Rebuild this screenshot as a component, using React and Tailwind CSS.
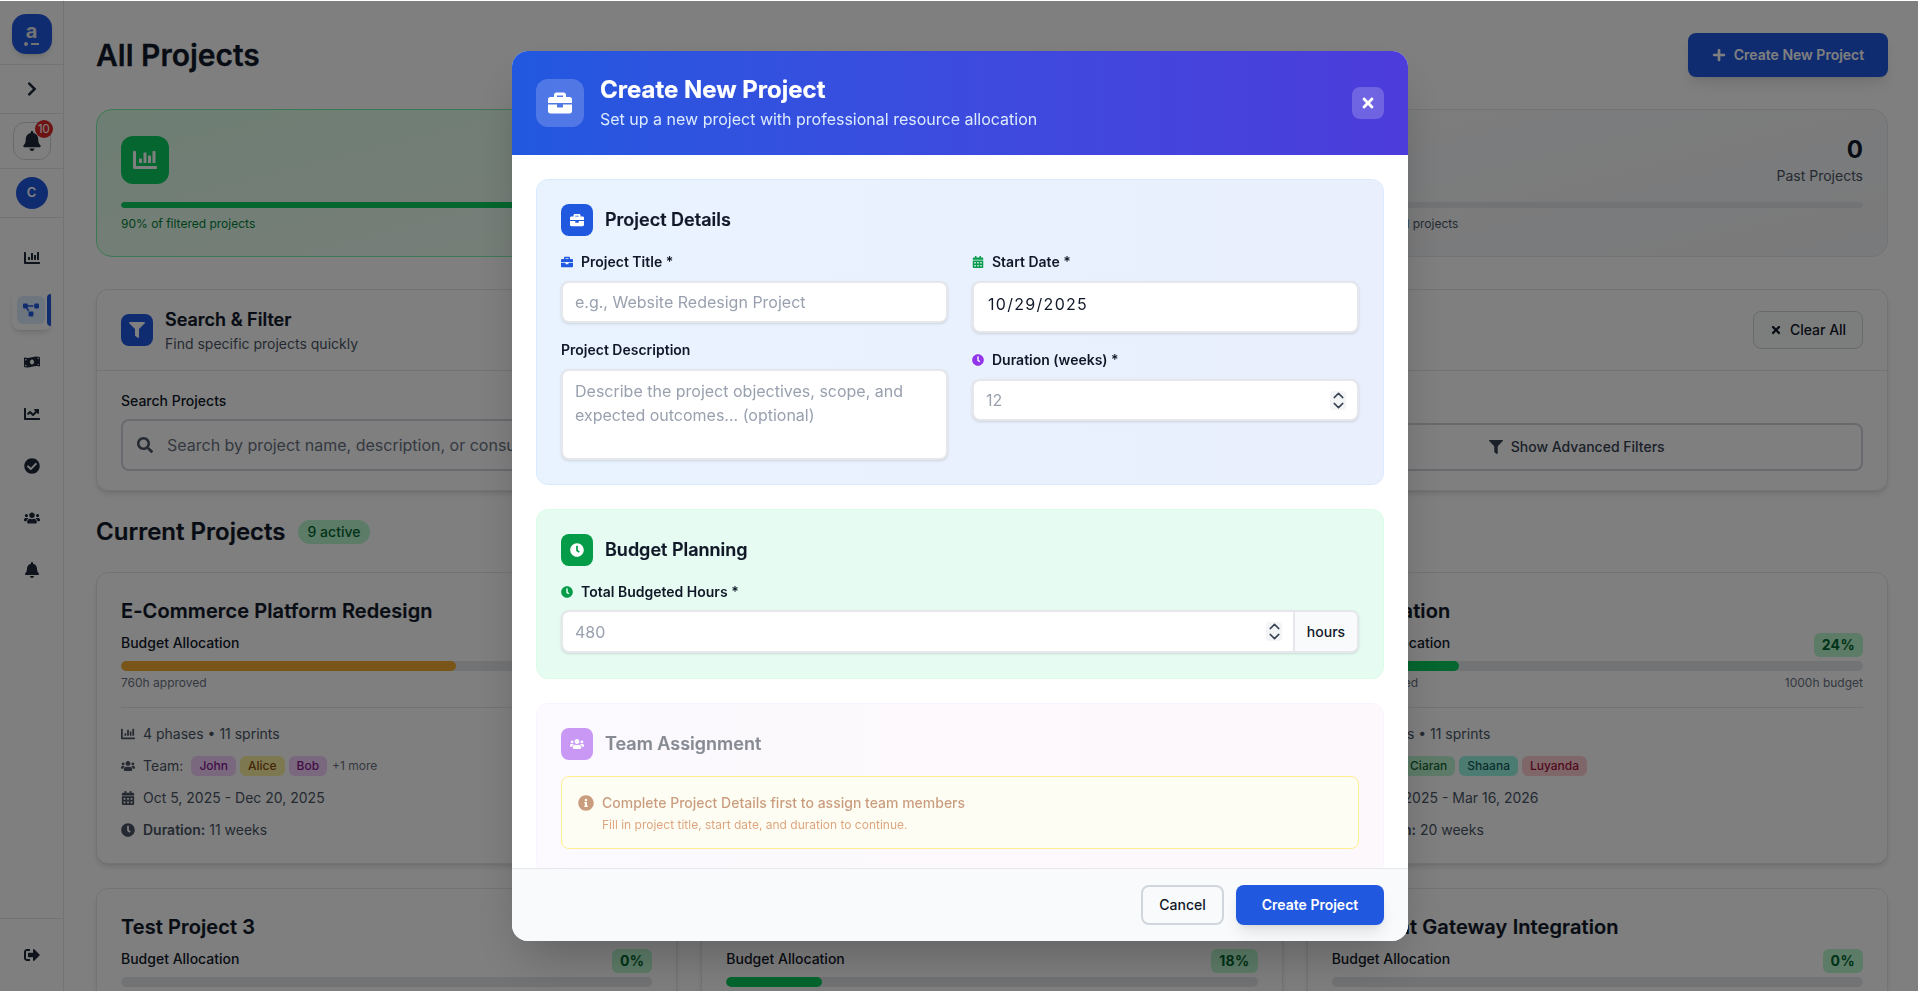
import {
  FaBell, FaBriefcase, FaCalendarAlt, FaChartBar, FaChartLine, FaCheckCircle, FaChevronRight,
  FaClock, FaFilter, FaInfoCircle, FaMoneyBillWave, FaPlus, FaProjectDiagram, FaSearch,
  FaSignOutAlt, FaTimes, FaUsers,
} from 'react-icons/fa'

const tagColors = {
  purple: 'bg-[#f5d0fe] text-[#86198f]',
  yellow: 'bg-[#fdf0a0] text-[#854d0e]',
  green: 'bg-[#bbf7d0] text-[#166534]',
  teal: 'bg-[#99f6e4] text-[#115e59]',
  red: 'bg-[#fecdd3] text-[#9f1239]',
}

const rowOne = [
  {
    title: 'E-Commerce Platform Redesign', pct: 63, bar: 'bg-[#f4aa30]', approved: '760h approved', budget: '1200h budget',
    phases: '4 phases', tags: [['John', 'purple'], ['Alice', 'yellow'], ['Bob', 'purple']], more: '+1 more',
    dates: 'Oct 5, 2025 - Dec 20, 2025', weeks: '11 weeks',
  },
  {
    title: 'Customer Portal', pct: 40, bar: 'bg-[#0acc5e]', approved: '320h approved', budget: '800h budget',
    phases: '3 phases', tags: [['John', 'purple'], ['Alice', 'yellow']], more: '',
    dates: 'Sep 1, 2025 - Dec 1, 2025', weeks: '13 weeks',
  },
  {
    title: 'UI Migration', pct: 24, bar: 'bg-[#0acc5e]', approved: '240h approved', budget: '1000h budget',
    phases: '4 phases', tags: [['Ciaran', 'green'], ['Shaana', 'teal'], ['Luyanda', 'red']], more: '',
    dates: 'Oct 27, 2025 - Mar 16, 2026', weeks: '20 weeks',
  },
]

const rowTwo = [
  { title: 'Test Project 3', pct: 0 },
  { title: 'Mobile App Launch', pct: 18 },
  { title: 'Payment Gateway Integration', pct: 0 },
]

function Sidebar() {
  const nav = [FaChartBar, FaProjectDiagram, FaMoneyBillWave, FaChartLine, FaCheckCircle, FaUsers, FaBell]
  return (
    <aside className="w-16 h-screen shrink-0 flex flex-col bg-white border-r border-gray-200 text-gray-800">
      <div className="h-[65px] flex items-center justify-center border-b border-gray-200 pt-1">
        <div className="w-10 h-10 rounded-[14px] bg-[#2158e0] shadow-md flex flex-col items-center justify-center text-white">
          <span className="font-bold text-xl leading-4 text-gray-200">a</span>
          <span className="flex items-center gap-[3px] mt-[3px]">
            <span className="w-[4px] h-[4px] rounded-full bg-gray-200"></span>
            <span className="w-2 h-[2px] bg-gray-200"></span>
          </span>
        </div>
      </div>
      <div className="h-[49px] flex items-center justify-center border-b border-gray-200">
        <FaChevronRight className="text-base" />
      </div>
      <div className="h-[55px] flex items-center justify-center border-b border-gray-200">
        <div className="relative w-[38px] h-[38px] rounded-xl border border-gray-300 flex items-center justify-center">
          <FaBell className="text-xl" />
          <span className="absolute -top-[3px] -right-[3px] w-[18px] h-[18px] rounded-full bg-[#dc2626] text-white text-xs flex items-center justify-center tracking-tighter">10</span>
        </div>
      </div>
      <div className="h-[49px] flex items-center justify-center border-b border-gray-200">
        <div className="w-8 h-8 rounded-full bg-[#2158e0] text-white text-[13px] font-semibold flex items-center justify-center">C</div>
      </div>
      <nav className="flex-1 flex flex-col items-center gap-3 pt-5">
        {nav.map((Icon, i) =>
          i === 1 ? (
            <div key={i} className="relative w-[39px] h-10 rounded-lg shadow-md flex items-center justify-center">
              <div className="w-7 h-7 -ml-[2px] rounded-md bg-blue-100 flex items-center justify-center text-[#2158e0]">
                <Icon className="text-base" />
              </div>
              <span className="absolute right-0 top-1 h-8 w-1 rounded-l bg-[#2158e0]"></span>
            </div>
          ) : (
            <div key={i} className="h-10 flex items-center justify-center">
              <Icon className="text-base" />
            </div>
          )
        )}
      </nav>
      <div className="h-[73px] flex items-center justify-center border-t border-gray-200">
        <FaSignOutAlt className="text-base" />
      </div>
    </aside>
  )
}

function StatCard({ tone, icon, value, label, note }) {
  const green = tone === 'green'
  return (
    <div className={`h-[148px] rounded-2xl border p-6 ${green ? 'bg-linear-to-br from-[#dcfce7] to-[#f0fdf4] border-green-300' : 'bg-linear-to-br from-gray-50 to-gray-100 border-gray-200'}`}>
      <div className="flex items-start justify-between h-[48px] mt-[2px]">
        <div className={`w-12 h-12 rounded-xl flex items-center justify-center text-white ${green ? 'bg-[#0acc5e]' : 'bg-gray-500'}`}>
          {icon}
        </div>
        <div className="text-right -mt-[2px]">
          <div className="text-2xl font-bold text-gray-900 leading-8">{value}</div>
          <div className="text-sm text-gray-600 leading-5">{label}</div>
        </div>
      </div>
      <div className="h-[6px] mt-[18px] rounded-full bg-gray-200 overflow-hidden">
        <div className={`h-full rounded-full ${green ? 'bg-[#0acc5e] w-[90%]' : 'w-0'}`}></div>
      </div>
      <div className={`text-xs mt-2 ${green ? 'text-green-700' : 'text-gray-600'}`}>{note}</div>
    </div>
  )
}

function Percent({ value }) {
  return <span className="h-6 px-2 rounded-md bg-green-200 text-green-800 text-sm font-bold flex items-center tracking-wide">{value}%</span>
}

function CardTop({ title, pct, bar }) {
  return (
    <>
      <h3 className="text-xl font-semibold tracking-[0.1px] [-webkit-text-stroke:0.2px] text-gray-900 leading-7 mb-[7px]">{title}</h3>
      <div className="flex items-center justify-between h-[26px]">
        <span className="text-sm font-medium text-gray-900 -mt-[5px]">Budget Allocation</span>
        <Percent value={pct} />
      </div>
      <div className="h-[10px] mt-[3px] rounded-full bg-gray-200 overflow-hidden">
        <div className={`h-full rounded-full ${bar}`} style={{ width: `${pct}%` }}></div>
      </div>
    </>
  )
}

function ProjectCard({ p }) {
  return (
    <div className="h-[292px] rounded-xl border border-gray-200 bg-white shadow-md p-6">
      <CardTop title={p.title} pct={p.pct} bar={p.bar} />
      <div className="flex justify-between text-xs text-gray-500 leading-4 mt-1">
        <span>{p.approved}</span>
        <span>{p.budget}</span>
      </div>
      <div className="border-t border-gray-200 mt-4 pt-4 flex flex-col gap-3 text-sm text-gray-600">
        <div className="flex items-center h-5 gap-2">
          <FaChartBar className="text-sm shrink-0" />
          <span>{p.phases} • 11 sprints</span>
        </div>
        <div className="flex items-center h-5 gap-2">
          <FaUsers className="text-sm shrink-0" />
          <span>Team:</span>
          <span className="flex items-center gap-1">
            {p.tags.map(([name, color]) => (
              <span key={name} className={`h-5 px-2 rounded-md text-xs font-medium flex items-center ${tagColors[color]}`}>{name}</span>
            ))}
            {p.more && <span className="text-xs text-gray-500 ml-[1px]">{p.more}</span>}
          </span>
        </div>
        <div className="flex items-center h-5 gap-2">
          <FaCalendarAlt className="text-sm shrink-0" />
          <span>{p.dates}</span>
        </div>
        <div className="flex items-center h-5 gap-2">
          <FaClock className="text-sm shrink-0" />
          <span><span className="font-semibold">Duration:</span> {p.weeks}</span>
        </div>
      </div>
    </div>
  )
}

function ShortCard({ p }) {
  return (
    <div className="h-[292px] rounded-xl border border-gray-200 bg-white shadow-md p-6">
      <CardTop title={p.title} pct={p.pct} bar="bg-[#0acc5e]" />
    </div>
  )
}

function Spinner() {
  return (
    <span className="w-4 h-[19px] rounded bg-gray-100 flex items-center justify-center shrink-0">
      <svg width="11" height="17" viewBox="0 0 11 17" fill="none" stroke="#374151" strokeWidth="1.5" strokeLinecap="round" strokeLinejoin="round">
        <path d="M1.2 5.6 5.5 1.4 9.8 5.6" />
        <path d="M1.2 11.4 5.5 15.6 9.8 11.4" />
      </svg>
    </span>
  )
}

function Label({ icon, children }) {
  return (
    <label className="flex items-center gap-2 h-5 text-sm font-semibold text-gray-900 mb-[9px]">
      {icon}
      {children}
    </label>
  )
}

function SectionHead({ icon, color, title }) {
  return (
    <div className="flex items-center gap-3 mb-4">
      <div className={`w-8 h-8 rounded-lg flex items-center justify-center text-white text-sm ${color}`}>{icon}</div>
      <h3 className="text-lg font-semibold [-webkit-text-stroke:0.2px] text-gray-900">{title}</h3>
    </div>
  )
}

const inputClass = 'w-full h-[42px] rounded-lg border-2 border-gray-200 bg-white shadow-sm px-[12px] text-base outline-none placeholder:text-gray-400'

function Modal() {
  return (
    <div className="fixed inset-x-0 bottom-0 top-px bg-black/50 flex items-center justify-center pl-[2px]">
      <div className="w-[896px] h-[890px] rounded-2xl bg-white shadow-2xl overflow-hidden flex flex-col">
        <div className="h-[104px] shrink-0 px-6 flex items-center justify-between bg-linear-to-r from-[#2158e0] to-[#4c3cdb] text-white">
          <div className="flex items-center gap-4">
            <div className="w-12 h-12 rounded-xl bg-white/20 flex items-center justify-center">
              <FaBriefcase className="text-2xl" />
            </div>
            <div>
              <h2 className="text-2xl font-bold [-webkit-text-stroke:0.2px] leading-8 -mt-[1px]">Create New Project</h2>
              <p className="text-base text-blue-100 leading-6 mt-[1px]">Set up a new project with professional resource allocation</p>
            </div>
          </div>
          <button className="w-8 h-8 rounded-lg bg-white/20 flex items-center justify-center">
            <FaTimes className="text-base" />
          </button>
        </div>

        <div className="flex-1 overflow-hidden p-6 flex flex-col gap-6">
          <section className="shrink-0 rounded-xl border border-blue-100 bg-linear-to-r from-[#e9f3ff] to-[#e9effd] p-6">
            <SectionHead icon={<FaBriefcase />} color="bg-[#2158e0]" title="Project Details" />
            <div className="grid grid-cols-2 gap-6">
              <div>
                <Label icon={<FaBriefcase className="text-xs text-[#2158e0]" />}>Project Title *</Label>
                <input className={inputClass} placeholder="e.g., Website Redesign Project" readOnly />
                <label className="block h-5 text-sm font-semibold text-gray-900 mt-[17px] mb-[9px]">Project Description</label>
                <textarea
                  className="w-full h-[91px] block rounded-lg border-2 border-gray-200 bg-white shadow-sm px-[12px] py-[8px] text-base leading-6 outline-none resize-none placeholder:text-gray-400"
                  placeholder="Describe the project objectives, scope, and expected outcomes... (optional)"
                  readOnly
                />
              </div>
              <div>
                <Label icon={<FaCalendarAlt className="text-xs text-[#059c49]" />}>Start Date *</Label>
                <div className="w-full h-[52px] rounded-lg border-2 border-gray-200 bg-white shadow-sm px-[14px] pt-[9px] text-base tracking-[1.3px] text-gray-900">10/29/2025</div>
                <div className="mt-[17px]">
                  <Label icon={<FaClock className="text-xs text-[#9333ea]" />}>Duration (weeks) *</Label>
                  <div className="w-full h-[42px] rounded-lg border-2 border-gray-200 bg-white shadow-sm pl-[12px] pr-[11px] flex items-center justify-between text-base text-gray-400">
                    <span>12</span>
                    <Spinner />
                  </div>
                </div>
              </div>
            </div>
          </section>

          <section className="shrink-0 rounded-xl border border-green-100 bg-[#e6fcf2] px-6 pt-6 pb-[25px]">
            <SectionHead icon={<FaClock />} color="bg-[#059c49]" title="Budget Planning" />
            <Label icon={<FaClock className="text-xs text-[#059c49]" />}>Total Budgeted Hours *</Label>
            <div className="flex h-[43px] -mt-px rounded-lg border-2 border-gray-200 bg-white shadow-sm overflow-hidden text-base">
              <div className="flex-1 pl-[12px] pr-[11px] flex items-center justify-between text-gray-400">
                <span>480</span>
                <Spinner />
              </div>
              <div className="w-[64px] border-l-2 border-gray-200 bg-gray-50 flex items-center justify-center text-sm font-medium text-gray-900">hours</div>
            </div>
          </section>

          <section className="shrink-0 rounded-xl border border-purple-100 bg-linear-to-r from-purple-50 to-pink-50 p-6 opacity-50">
            <SectionHead icon={<FaUsers />} color="bg-[#9333ea]" title="Team Assignment" />
            <div className="h-[73px] rounded-lg border border-yellow-300 bg-yellow-50 px-4 pt-4 flex gap-2">
              <FaInfoCircle className="text-amber-800 text-base mt-[2px] shrink-0" />
              <div>
                <p className="text-sm font-medium text-amber-800 leading-5">Complete Project Details first to assign team members</p>
                <p className="text-xs text-amber-700 leading-4 mt-1">Fill in project title, start date, and duration to continue.</p>
              </div>
            </div>
          </section>
        </div>

        <div className="h-[73px] shrink-0 border-t border-gray-200 bg-gray-50 px-6 flex items-center justify-end gap-3">
          <button className="w-[83px] h-10 rounded-lg border-2 border-gray-300 text-sm font-medium text-gray-900">Cancel</button>
          <button className="w-[148px] h-10 rounded-lg bg-[#2158e0] text-white text-sm font-semibold shadow-lg">Create Project</button>
        </div>
      </div>
    </div>
  )
}

export default function App() {
  return (
    <div className="h-screen overflow-hidden flex bg-white font-['Inter',sans-serif]">
      <Sidebar />
      <main className="flex-1 overflow-hidden pl-8 pr-[30px] pt-[33px]">
        <div className="flex items-center justify-between mb-8">
          <h1 className="text-3xl font-semibold [-webkit-text-stroke:0.3px] text-gray-900">All Projects</h1>
          <button className="w-[200px] h-11 rounded-lg bg-[#2158e0] text-white text-sm font-semibold shadow-lg flex items-center justify-center gap-2">
            <FaPlus className="text-sm" />
            Create New Project
          </button>
        </div>

        <div className="grid grid-cols-3 gap-6 mb-8">
          <StatCard tone="green" icon={<FaChartBar className="text-2xl" />} value="9" label="Current Projects" note="90% of filtered projects" />
          <StatCard tone="blue" icon={<FaClock className="text-2xl" />} value="1" label="Upcoming Projects" note="10% of filtered projects" />
          <StatCard tone="gray" icon={<FaCheckCircle className="text-2xl" />} value="0" label="Past Projects" note="0% of filtered projects" />
        </div>

        <div className="h-[202px] rounded-xl border border-gray-200 bg-white shadow-md mb-[25px]">
          <div className="h-[81px] border-b border-gray-200 px-6 flex items-center justify-between">
            <div className="flex items-center gap-3">
              <div className="w-8 h-8 rounded-lg bg-[#2158e0] text-white flex items-center justify-center">
                <FaFilter className="text-base" />
              </div>
              <div>
                <div className="text-lg font-semibold [-webkit-text-stroke:0.2px] text-gray-900 leading-7">Search &amp; Filter</div>
                <div className="text-sm text-gray-600 leading-5">Find specific projects quickly</div>
              </div>
            </div>
            <button className="w-[110px] h-[38px] rounded-lg border border-gray-300 bg-gray-50 text-sm font-medium text-gray-900 flex items-center justify-center gap-2">
              <FaTimes className="text-xs" />
              Clear All
            </button>
          </div>
          <div className="px-6 pt-5 grid grid-cols-[2fr_1fr] gap-6 items-end">
            <div>
              <div className="text-sm font-medium text-gray-900 leading-5 mb-2">Search Projects</div>
              <div className="h-[52px] rounded-lg border-2 border-gray-300 px-[14px] flex items-center gap-[14px] text-base text-gray-500">
                <FaSearch className="text-base text-gray-600" />
                Search by project name, description, or consultant...
              </div>
            </div>
            <button className="h-12 rounded-lg border-2 border-gray-300 text-sm font-medium text-gray-700 flex items-center justify-center gap-2">
              <FaFilter className="text-sm" />
              Show Advanced Filters
            </button>
          </div>
        </div>

        <div className="flex items-center gap-3 mb-6">
          <h2 className="text-2xl font-semibold [-webkit-text-stroke:0.2px] text-gray-900 leading-8">Current Projects</h2>
          <span className="h-6 px-[10px] rounded-full bg-green-200 text-green-800 text-sm font-medium flex items-center">9 active</span>
        </div>

        <div className="grid grid-cols-3 gap-6">
          {rowOne.map((p) => <ProjectCard key={p.title} p={p} />)}
          {rowTwo.map((p) => <ShortCard key={p.title} p={p} />)}
        </div>
      </main>
      <Modal />
    </div>
  )
}
